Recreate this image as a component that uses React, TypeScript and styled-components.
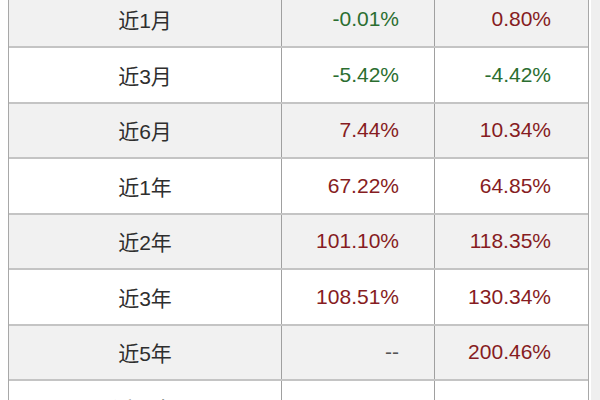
import React from "react";
import styled, { createGlobalStyle } from "styled-components";

const Global = createGlobalStyle`
  html, body { margin: 0; padding: 0; background: #ffffff; overflow: hidden; }
  body { font-family: "Liberation Sans", "Noto Sans CJK SC", sans-serif; }
`;

const Page = styled.div`
  width: 600px;
  height: 400px;
  overflow: hidden;
  display: flex;
  align-items: flex-start;
  background: #ffffff;
`;

const Table = styled.div`
  margin-left: 8px;
  margin-top: -7.5px;
  width: 579px;
  border-left: 1px solid #a8a8a8;
  border-right: 1px solid #a8a8a8;
  display: flex;
  flex-direction: column;
  flex-shrink: 0;
`;

const SideStrip = styled.div`
  flex: 1;
  align-self: stretch;
  margin-left: 2px;
  background: #efefef;
`;

const Row = styled.div<{ $alt: boolean }>`
  display: grid;
  flex-shrink: 0;
  grid-template-columns: 272px 153px 152px;
  height: 53.5px;
  border-bottom: 2px solid #c4c4c4;
  background: ${(p) => (p.$alt ? "#f1f1f1" : "#ffffff")};
`;

const Label = styled.div`
  display: flex;
  align-items: center;
  justify-content: center;
  font-size: 21px;
  color: #2e2e2e;
`;

const Value = styled.div<{ $tone: "up" | "down" | "none" }>`
  display: flex;
  align-items: center;
  justify-content: flex-end;
  padding-right: 35px;
  border-left: 1px solid #a0a0a0;
  font-size: 21px;
  color: ${(p) =>
    p.$tone === "up" ? "#861c22" : p.$tone === "down" ? "#2b6e30" : "#555555"};
`;

type R = { label: string; a: string; b: string };

const rows: R[] = [
  { label: "近1月", a: "-0.01%", b: "0.80%" },
  { label: "近3月", a: "-5.42%", b: "-4.42%" },
  { label: "近6月", a: "7.44%", b: "10.34%" },
  { label: "近1年", a: "67.22%", b: "64.85%" },
  { label: "近2年", a: "101.10%", b: "118.35%" },
  { label: "近3年", a: "108.51%", b: "130.34%" },
  { label: "近5年", a: "--", b: "200.46%" },
  { label: "近10年", a: "235.17%", b: "312.90%" },
];

const tone = (v: string): "up" | "down" | "none" =>
  v === "--" ? "none" : v.startsWith("-") ? "down" : "up";

export default function App() {
  return (
    <>
      <Global />
      <Page>
        <Table>
          {rows.map((r, i) => (
            <Row key={r.label} $alt={i % 2 === 0}>
              <Label>{r.label}</Label>
              <Value $tone={tone(r.a)}>{r.a}</Value>
              <Value $tone={tone(r.b)}>{r.b}</Value>
            </Row>
          ))}
        </Table>
        <SideStrip />
      </Page>
    </>
  );
}
